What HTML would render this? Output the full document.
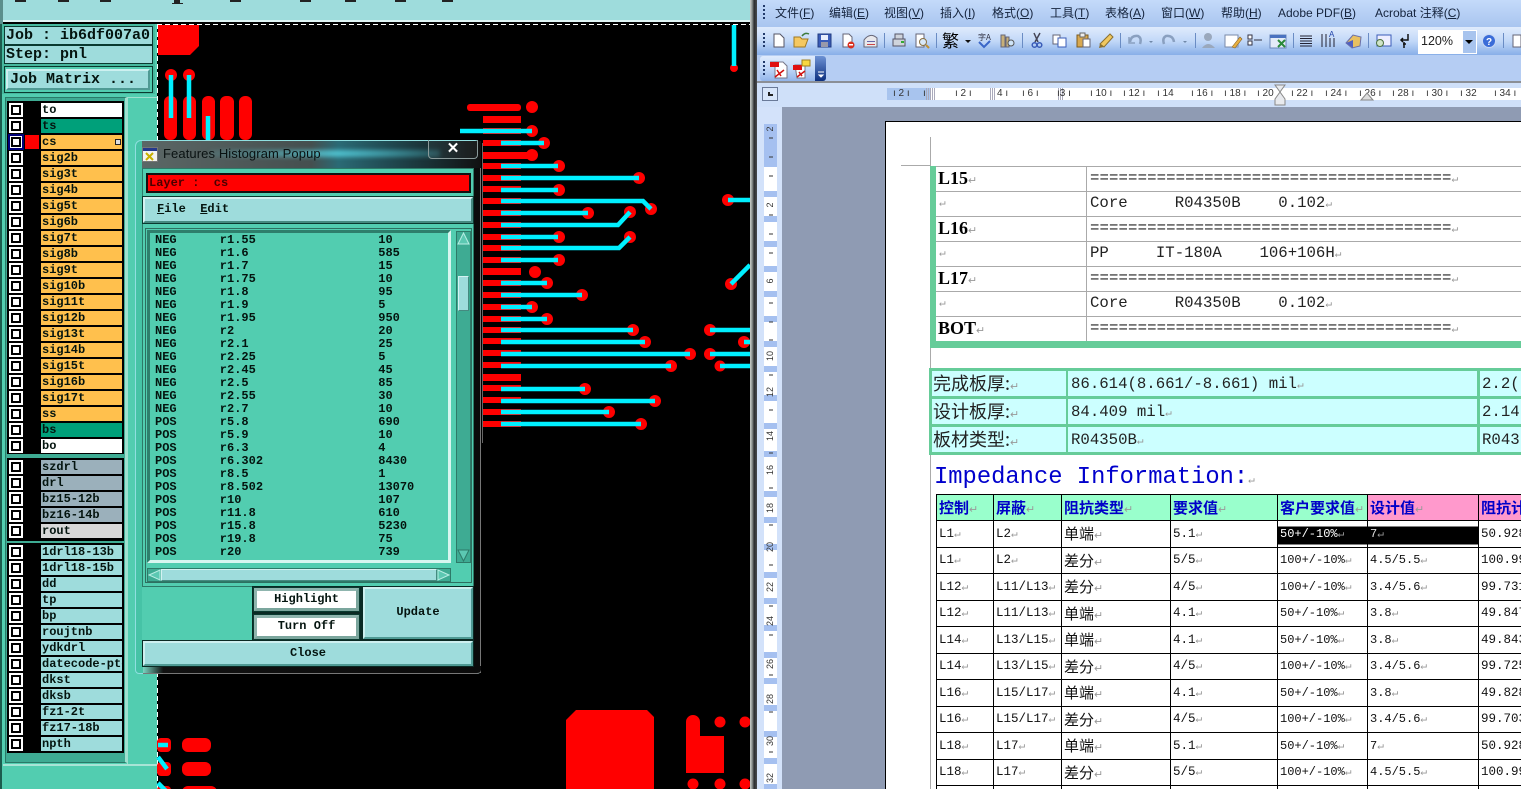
<!DOCTYPE html>
<html><head><meta charset="utf-8"><title>Features Histogram</title>
<style>
html,body{margin:0;padding:0;background:#000}
#p{position:relative;width:1521px;height:789px;overflow:hidden;background:#000;font-family:"Liberation Mono","Noto Sans CJK SC",monospace}
#p div,#p span.a{position:absolute;box-sizing:border-box}
.t{white-space:pre}
.r{left:41px;width:81px;height:14px;font:bold 12px/14px "Liberation Mono",monospace;color:#04140f;padding-left:1px;white-space:pre;overflow:hidden}
.c{left:9px;width:14px;height:14px;background:#fff}
.c::after{content:"";position:absolute;left:2px;top:2px;width:10px;height:10px;box-sizing:border-box;border:2px solid #000;background:#fff}
.am{background:#ffc04d}.gr{background:#9bb0bb}.cy{background:#9edcdc}
.btn{background:#9edcdc;border:2px solid;border-color:#cdf0f0 #4f9a94 #4f9a94 #cdf0f0;font:bold 12px "Liberation Mono",monospace;color:#04140f;text-align:center}
.wb{background:#fff;border:3px solid;border-color:#8fb5ae #7ba69d #7ba69d #8fb5ae;outline:1px solid #0a3a30;font:bold 12px/17px "Liberation Mono",monospace;color:#04140f;text-align:center}
.h{left:155px;width:290px;height:13px;font:bold 12px/13px "Liberation Mono",monospace;color:#04140f;white-space:pre}
.m{top:5px;font:12px/16px "Liberation Sans","Noto Sans CJK SC",sans-serif;color:#14233c;white-space:pre}
.m u{text-underline-offset:1px}
.rn{top:88px;font:10px/12px "Liberation Sans",sans-serif;color:#333;white-space:pre}
.b1{font:bold 18px/20px "Liberation Serif",serif;color:#000;left:938px;white-space:pre}
.mono{font:15.7px/20px "Liberation Mono","Noto Sans CJK SC",monospace;color:#222;white-space:pre}
.rm{color:#999;font-size:11px;font-weight:normal}
table{border-collapse:collapse;table-layout:fixed}
#imp td{border:1px solid #000;height:26.5px;padding:0 0 0 2px;font:12.5px "Liberation Mono","Noto Sans CJK SC",monospace;color:#111;white-space:nowrap;overflow:hidden;box-sizing:border-box}
#imp tr.h0 td{height:26px;background:#99ffcc;color:#0000c8;font:bold 15px "Liberation Sans","Noto Sans CJK SC",sans-serif}
#imp td.z{font:15px "Noto Sans CJK SC",sans-serif}
#imp .s{font-size:12px}
</style></head><body><div id="p">

<!-- LEFT APP -->
<div style="left:0;top:0;width:750px;height:22px;background:#9edcdc;border-bottom:2px solid #dff4f4"></div>
<div style="left:0;top:0;width:3px;height:24px;background:#5a8f8c"></div>
<div style="left:15px;top:0;width:11px;height:2px;background:#222"></div>
<div style="left:58px;top:0;width:11px;height:2px;background:#222"></div>
<div style="left:100px;top:0;width:11px;height:2px;background:#222"></div>
<div style="left:174px;top:0;width:6px;height:3px;background:#222"></div>
<div style="left:172px;top:3px;width:11px;height:1px;background:#222"></div>
<div style="left:230px;top:0;width:11px;height:2px;background:#222"></div>
<div style="left:300px;top:0;width:11px;height:2px;background:#222"></div>
<div style="left:345px;top:0;width:11px;height:2px;background:#222"></div>
<div style="left:395px;top:0;width:11px;height:2px;background:#222"></div>
<div style="left:442px;top:0;width:11px;height:2px;background:#222"></div>

<div style="left:0;top:24px;width:157px;height:765px;background:#52cdb0"></div>
<div style="left:0;top:24px;width:2px;height:765px;background:#1c5c4e"></div>
<div style="left:2px;top:24px;width:153px;height:70px;background:#46b89e"></div>
<div class="t" style="left:4px;top:26px;width:149px;height:19px;background:#9edcdc;border:1px solid #0a3a30;font:bold 15px/17px 'Liberation Mono',monospace;color:#04140f;padding-left:1px">Job : ib6df007a0</div>
<div class="t" style="left:4px;top:45px;width:149px;height:19px;background:#9edcdc;border:1px solid #0a3a30;font:bold 15px/17px 'Liberation Mono',monospace;color:#04140f;padding-left:1px">Step: pnl</div>
<div style="left:4px;top:66px;width:149px;height:27px;background:#52cdb0;border:1px solid #0a3a30"></div>
<div class="btn t" style="left:6px;top:69px;width:144px;height:21px;font-size:15px;line-height:17px;text-align:left;padding-left:2px">Job Matrix ...</div>

<div style="left:5px;top:97px;width:122px;height:666px;background:#3eab93;border:1px solid #2a7a68;border-right:2px solid #9fe0cf"></div>
<div style="left:127px;top:97px;width:30px;height:692px;background:#52cdb0;border-top:1px solid #9fe0cf;border-left:1px solid #9fe0cf"></div>
<div style="left:3px;top:764px;width:154px;height:25px;background:#52cdb0;border-top:2px solid #a8e4d6"></div>

<div style="left:7px;top:101px;width:117px;height:353px;background:#000"></div>
<div style="left:7px;top:458px;width:117px;height:83px;background:#000"></div>
<div style="left:7px;top:543px;width:117px;height:210px;background:#000"></div>

<div class="c" style="top:103px"></div><div class="r" style="top:103px;background:#fff">to</div>
<div class="c" style="top:119px"></div><div class="r" style="top:119px;background:#00a07a">ts</div>
<div class="c" style="top:135px;outline:2px solid #00007a;outline-offset:-1px"></div><div style="left:25px;top:135px;width:14px;height:14px;background:#f00"></div><div class="r am" style="top:135px">cs</div>
<div style="left:115px;top:139px;width:6px;height:6px;border:1px solid #222;background:#ddd"></div>
<div class="c" style="top:151px"></div><div class="r am" style="top:151px">sig2b</div>
<div class="c" style="top:167px"></div><div class="r am" style="top:167px">sig3t</div>
<div class="c" style="top:183px"></div><div class="r am" style="top:183px">sig4b</div>
<div class="c" style="top:199px"></div><div class="r am" style="top:199px">sig5t</div>
<div class="c" style="top:215px"></div><div class="r am" style="top:215px">sig6b</div>
<div class="c" style="top:231px"></div><div class="r am" style="top:231px">sig7t</div>
<div class="c" style="top:247px"></div><div class="r am" style="top:247px">sig8b</div>
<div class="c" style="top:263px"></div><div class="r am" style="top:263px">sig9t</div>
<div class="c" style="top:279px"></div><div class="r am" style="top:279px">sig10b</div>
<div class="c" style="top:295px"></div><div class="r am" style="top:295px">sig11t</div>
<div class="c" style="top:311px"></div><div class="r am" style="top:311px">sig12b</div>
<div class="c" style="top:327px"></div><div class="r am" style="top:327px">sig13t</div>
<div class="c" style="top:343px"></div><div class="r am" style="top:343px">sig14b</div>
<div class="c" style="top:359px"></div><div class="r am" style="top:359px">sig15t</div>
<div class="c" style="top:375px"></div><div class="r am" style="top:375px">sig16b</div>
<div class="c" style="top:391px"></div><div class="r am" style="top:391px">sig17t</div>
<div class="c" style="top:407px"></div><div class="r am" style="top:407px">ss</div>
<div class="c" style="top:423px"></div><div class="r" style="top:423px;background:#00a07a">bs</div>
<div class="c" style="top:439px"></div><div class="r" style="top:439px;background:#fff">bo</div>

<div class="c" style="top:460px"></div><div class="r gr" style="top:460px">szdrl</div>
<div class="c" style="top:476px"></div><div class="r gr" style="top:476px">drl</div>
<div class="c" style="top:492px"></div><div class="r gr" style="top:492px">bz15-12b</div>
<div class="c" style="top:508px"></div><div class="r gr" style="top:508px">bz16-14b</div>
<div class="c" style="top:524px"></div><div class="r" style="top:524px;background:#d8d8d8">rout</div>

<div class="c" style="top:545px"></div><div class="r cy" style="top:545px">1drl18-13b</div>
<div class="c" style="top:561px"></div><div class="r cy" style="top:561px">1drl18-15b</div>
<div class="c" style="top:577px"></div><div class="r cy" style="top:577px">dd</div>
<div class="c" style="top:593px"></div><div class="r cy" style="top:593px">tp</div>
<div class="c" style="top:609px"></div><div class="r cy" style="top:609px">bp</div>
<div class="c" style="top:625px"></div><div class="r cy" style="top:625px">roujtnb</div>
<div class="c" style="top:641px"></div><div class="r cy" style="top:641px">ydkdrl</div>
<div class="c" style="top:657px"></div><div class="r cy" style="top:657px">datecode-ptc</div>
<div class="c" style="top:673px"></div><div class="r cy" style="top:673px">dkst</div>
<div class="c" style="top:689px"></div><div class="r cy" style="top:689px">dksb</div>
<div class="c" style="top:705px"></div><div class="r cy" style="top:705px">fz1-2t</div>
<div class="c" style="top:721px"></div><div class="r cy" style="top:721px">fz17-18b</div>
<div class="c" style="top:737px"></div><div class="r cy" style="top:737px">npth</div>

<!-- PCB -->
<svg style="position:absolute;left:0;top:0" width="750" height="789" viewBox="0 0 750 789">
<line x1="157.500" y1="24" x2="157.500" y2="789" stroke="#fff" stroke-dasharray="5 3"/>
<line x1="157" y1="24.500" x2="750" y2="24.500" stroke="#fff" stroke-dasharray="5 3"/>
<g fill="#f00">
<path d="M158 25H199V46L190 55H158Z"/>
<rect x="164" y="96" width="13" height="44" rx="6"/><rect x="183" y="96" width="13" height="44" rx="6"/><rect x="202" y="96" width="13" height="44" rx="6"/><rect x="220" y="96" width="14" height="44" rx="6"/><rect x="239" y="96" width="13" height="44" rx="6"/>
<circle cx="171" cy="75" r="6"/><circle cx="189" cy="75" r="6"/><circle cx="734" cy="68" r="4"/>
<rect x="467" y="104" width="54" height="7" rx="3"/><rect x="483" y="116" width="38" height="7"/><rect x="483" y="128" width="38" height="6"/>
<rect x="483" y="140" width="38" height="6"/><rect x="483" y="152" width="49" height="7"/><rect x="483" y="163" width="38" height="6"/><rect x="483" y="175" width="38" height="6"/><rect x="483" y="186" width="38" height="6"/><rect x="483" y="198" width="38" height="6"/><rect x="483" y="210" width="38" height="6"/><rect x="483" y="222" width="38" height="6"/><rect x="483" y="234" width="38" height="6"/><rect x="483" y="245" width="38" height="6"/><rect x="483" y="257" width="38" height="6"/><rect x="482" y="268" width="39" height="7"/><rect x="483" y="280" width="38" height="6"/><rect x="483" y="292" width="38" height="6"/><rect x="483" y="304" width="38" height="6"/><rect x="483" y="316" width="38" height="6"/><rect x="483" y="327" width="38" height="6"/><rect x="483" y="338" width="38" height="6"/><rect x="483" y="350" width="38" height="6"/><rect x="483" y="362" width="38" height="6"/><rect x="482" y="374" width="39" height="7"/><rect x="483" y="385" width="38" height="6"/><rect x="483" y="397" width="38" height="6"/><rect x="483" y="409" width="38" height="6"/><rect x="483" y="421" width="38" height="6"/>
<circle cx="532" cy="107" r="6"/><circle cx="532" cy="131" r="6"/><circle cx="544" cy="143" r="6"/><circle cx="532" cy="155" r="6"/><circle cx="559" cy="166" r="6"/><circle cx="639" cy="178" r="6"/><circle cx="559" cy="190" r="6"/><circle cx="651" cy="209" r="6"/><circle cx="588" cy="213" r="6"/><circle cx="630" cy="212" r="6"/><circle cx="559" cy="237" r="6"/><circle cx="630" cy="237" r="6"/><circle cx="559" cy="260" r="6"/><circle cx="535" cy="272" r="6"/><circle cx="547" cy="283" r="6"/><circle cx="582" cy="295" r="6"/><circle cx="532" cy="307" r="6"/><circle cx="547" cy="319" r="6"/><circle cx="633" cy="330" r="6"/><circle cx="645" cy="342" r="6"/><circle cx="690" cy="354" r="6"/><circle cx="671" cy="366" r="6"/><circle cx="585" cy="389" r="6"/><circle cx="655" cy="401" r="6"/><circle cx="609" cy="412" r="6"/><circle cx="641" cy="424" r="6"/>
<circle cx="728" cy="200" r="6"/><circle cx="731" cy="284" r="6"/><circle cx="710" cy="330" r="6"/><circle cx="744" cy="342" r="6"/><circle cx="710" cy="354" r="6"/><circle cx="720" cy="366" r="5.500"/>
<path d="M576 710H647L654 717V789H566V720Z"/>
<path d="M686 722A6 6 0 0 1 700 722V736H724V773H686Z"/>
<circle cx="720" cy="722" r="5.500"/><circle cx="745" cy="722" r="5.500"/><circle cx="693" cy="784" r="5.500"/><circle cx="720" cy="784" r="5.500"/><circle cx="745" cy="784" r="5.500"/>
<rect x="157" y="738" width="14" height="14" rx="4"/><rect x="157" y="762" width="14" height="14" rx="4"/><rect x="157" y="786" width="14" height="14" rx="4"/>
<rect x="182" y="738" width="29" height="14" rx="6"/><rect x="182" y="762" width="29" height="14" rx="6"/><rect x="182" y="786" width="35" height="14" rx="6"/>
</g>
<g stroke="#00f0ff" stroke-width="4.500" fill="none">
<path d="M171 75V118M189 75V118M208 116V150M734 25V66"/>
<path d="M460 131H532M501 143H544M501 166H558M501 178H639M501 190H558M501 201H643L651 209M501 213H588M501 225H618L630 212M501 237H558M501 248H619L630 237M501 260H558M501 283H547M501 295H582M501 307H532M501 319H547M501 330H633M501 342H645M501 354H690M501 366H671M501 389H585M501 401H655M501 412H609M501 424H641"/>
<path d="M728 200H750M731 284L750 265M710 330H750M744 342H750M710 354H750M720 366H750"/>
<path d="M158 745H168M158 757L167 769M158 783L167 792"/>
</g>
</svg>
<div style="left:482px;top:143px;width:1px;height:300px;background:#666"></div>

<!-- POPUP -->
<div style="left:135px;top:140px;width:346px;height:534px;background:#46c3a6;border:1px solid #8fdfe0;border-radius:6px 6px 4px 4px"></div>
<div style="left:473px;top:141px;width:8px;height:532px;background:#0b0b0b;border-right:1px solid #777"></div>
<div style="left:143px;top:666px;width:338px;height:8px;background:linear-gradient(90deg,#7ad6c2,#111 6%,#0b0b0b);border-bottom:1px solid #777;border-radius:0 0 4px 0"></div>
<div style="left:142px;top:141px;width:339px;height:27px;background:linear-gradient(90deg,#5b6766 0,#454f4f 50%,#2a6a75 58%,#1c3a40 80%,#111 100%)"></div>
<div style="left:210px;top:150px;width:230px;height:7px;background:linear-gradient(90deg,rgba(90,220,235,.1),rgba(90,220,235,.75) 55%,rgba(90,220,235,.2));filter:blur(2px)"></div>
<div style="left:428px;top:140px;width:50px;height:19px;border:1px solid #8a9a9a;border-top:none;border-radius:0 0 4px 4px;background:rgba(255,255,255,.04)"></div>
<div style="left:443px;top:140px;width:20px;height:18px;color:#fff;font:bold 15px/18px 'Liberation Sans',sans-serif;text-align:center">✕</div>
<svg style="position:absolute;left:142px;top:147px" width="16" height="15" viewBox="0 0 16 15"><rect x=".5" y=".5" width="15" height="14" fill="#f4f4f0" stroke="#777"/><rect x="1" y="1" width="14" height="3" fill="#24388c"/><path d="M4 6L11 13M11 6L4 13" stroke="#c8b000" stroke-width="2"/></svg>
<div class="t" style="left:163px;top:146px;font:13px/16px 'Liberation Sans',sans-serif;color:#0a1212;letter-spacing:.1px">Features Histogram Popup</div>

<div style="left:142px;top:168px;width:332px;height:498px;background:#52cdb0;border:1px solid #2d7a68"></div>
<div class="t" style="left:146px;top:173px;width:325px;height:20px;background:#f00;border:2px solid #111;font:bold 12px/16px 'Liberation Mono',monospace;color:#4a0000;padding-left:1px">Layer :  cs</div>
<div style="left:143px;top:197px;width:330px;height:26px;background:#9edcdc;border:2px solid;border-color:#d4f2f2 #458a80 #458a80 #d4f2f2;outline:1px solid #0a3a30"></div>
<div class="t" style="left:157px;top:202px;font:bold 12px/14px 'Liberation Mono',monospace;color:#04140f"><u>F</u>ile  <u>E</u>dit</div>

<div style="left:145px;top:228px;width:327px;height:355px;background:#52cdb0;border:1px solid #2d6f60"></div>
<div style="left:147px;top:230px;width:304px;height:333px;background:#52cdb0;border:3px solid;border-color:#2e7f6c #d8f6f0 #d8f6f0 #2e7f6c"></div>
<div class="h" style="top:234px">NEG      r1.55                 10</div>
<div class="h" style="top:247px">NEG      r1.6                  585</div>
<div class="h" style="top:260px">NEG      r1.7                  15</div>
<div class="h" style="top:273px">NEG      r1.75                 10</div>
<div class="h" style="top:286px">NEG      r1.8                  95</div>
<div class="h" style="top:299px">NEG      r1.9                  5</div>
<div class="h" style="top:312px">NEG      r1.95                 950</div>
<div class="h" style="top:325px">NEG      r2                    20</div>
<div class="h" style="top:338px">NEG      r2.1                  25</div>
<div class="h" style="top:351px">NEG      r2.25                 5</div>
<div class="h" style="top:364px">NEG      r2.45                 45</div>
<div class="h" style="top:377px">NEG      r2.5                  85</div>
<div class="h" style="top:390px">NEG      r2.55                 30</div>
<div class="h" style="top:403px">NEG      r2.7                  10</div>
<div class="h" style="top:416px">POS      r5.8                  690</div>
<div class="h" style="top:429px">POS      r5.9                  10</div>
<div class="h" style="top:442px">POS      r6.3                  4</div>
<div class="h" style="top:455px">POS      r6.302                8430</div>
<div class="h" style="top:468px">POS      r8.5                  1</div>
<div class="h" style="top:481px">POS      r8.502                13070</div>
<div class="h" style="top:494px">POS      r10                   107</div>
<div class="h" style="top:507px">POS      r11.8                 610</div>
<div class="h" style="top:520px">POS      r15.8                 5230</div>
<div class="h" style="top:533px">POS      r19.8                 75</div>
<div class="h" style="top:546px">POS      r20                   739</div>

<div style="left:456px;top:231px;width:15px;height:332px;background:#3eab93;border:1px solid #2d7a68"></div>
<svg style="position:absolute;left:456px;top:231px" width="15" height="332" viewBox="0 0 15 332"><path d="M7.500 2L13 13H2Z" fill="#5cc8b2" stroke="#b8eee4"/><path d="M7.500 330L13 319H2Z" fill="#5cc8b2" stroke="#2d7a68"/></svg>
<div style="left:458px;top:276px;width:11px;height:35px;background:#9edcdc;border:1px solid;border-color:#d4f2f2 #458a80 #458a80 #d4f2f2"></div>
<div style="left:147px;top:568px;width:304px;height:14px;background:#3eab93;border:1px solid #2d7a68"></div>
<div style="left:161px;top:569px;width:276px;height:12px;background:#9edcdc;border:1px solid;border-color:#d4f2f2 #458a80 #458a80 #d4f2f2"></div>
<svg style="position:absolute;left:147px;top:568px" width="304" height="14" viewBox="0 0 304 14"><path d="M2 7L13 2V12Z" fill="#5cc8b2" stroke="#b8eee4"/><path d="M302 7L291 2V12Z" fill="#5cc8b2" stroke="#b8eee4"/></svg>

<div style="left:142px;top:586px;width:332px;height:81px;background:#52cdb0;border-top:1px solid #2d7a68"></div>
<div style="left:252px;top:586px;width:110px;height:54px;background:#0a2a24"></div>
<div class="wb" style="left:254px;top:588px;width:105px;height:23px">Highlight</div>
<div class="wb" style="left:254px;top:615px;width:105px;height:24px">Turn Off</div>
<div class="btn" style="left:363px;top:587px;width:110px;height:52px;line-height:47px;outline:1px solid #0a2a24">Update</div>
<div class="btn" style="left:143px;top:641px;width:330px;height:25px;line-height:21px;outline:1px solid #0a2a24">Close</div>

<!-- WORD -->
<div style="left:750px;top:0;width:771px;height:789px;background:#c9dcf8"></div>
<div style="left:750px;top:0;width:7px;height:789px;background:linear-gradient(90deg,#ccd0cc 0,#8c9290 30%,#2c2e30 60%,#4a4c4e 100%)"></div>
<div style="left:757px;top:0;width:764px;height:27px;background:linear-gradient(#c4dafa,#a9c5ef)"></div>
<div style="left:757px;top:27px;width:764px;height:55px;background:#b5cdf3"></div>
<div style="left:757px;top:27px;width:764px;height:28px;background:linear-gradient(#dfebfc,#c2d8f8 50%,#88aee8)"></div>
<div style="left:760px;top:56px;width:66px;height:25px;background:linear-gradient(#dfebfc,#c2d8f8 50%,#92b5ea);border-radius:3px"></div>
<div style="left:815px;top:56px;width:11px;height:25px;background:linear-gradient(#6d92d4,#0c2f7e);border-radius:0 3px 3px 0"></div>
<div style="left:757px;top:81px;width:764px;height:2px;background:#8b8f96"></div>
<div style="left:757px;top:83px;width:764px;height:24px;background:#cfe0f9"></div>

<div class="m" style="left:775px">文件(<u>F</u>)</div>
<div class="m" style="left:829px">编辑(<u>E</u>)</div>
<div class="m" style="left:884px">视图(<u>V</u>)</div>
<div class="m" style="left:940px">插入(<u>I</u>)</div>
<div class="m" style="left:992px">格式(<u>O</u>)</div>
<div class="m" style="left:1050px">工具(<u>T</u>)</div>
<div class="m" style="left:1105px">表格(<u>A</u>)</div>
<div class="m" style="left:1161px">窗口(<u>W</u>)</div>
<div class="m" style="left:1221px">帮助(<u>H</u>)</div>
<div class="m" style="left:1278px">Adobe PDF(<u>B</u>)</div>
<div class="m" style="left:1375px">Acrobat 注释(<u>C</u>)</div>

<!-- toolbar icons -->
<svg style="position:absolute;left:757px;top:0" width="764" height="84" viewBox="757 0 764 84">
<g fill="#223a6a"><rect x="763" y="5" width="2" height="2"/><rect x="763" y="9" width="2" height="2"/><rect x="763" y="13" width="2" height="2"/><rect x="763" y="17" width="2" height="2"/><rect x="763" y="33" width="2" height="2"/><rect x="763" y="37" width="2" height="2"/><rect x="763" y="41" width="2" height="2"/><rect x="763" y="45" width="2" height="2"/><rect x="763" y="61" width="2" height="2"/><rect x="763" y="65" width="2" height="2"/><rect x="763" y="69" width="2" height="2"/><rect x="763" y="73" width="2" height="2"/></g>
<path d="M774 34H780L784 38V47H774Z" fill="#fff" stroke="#556"/>
<path d="M794 47V37H800L802 39H808L805 47Z" fill="#f5c860" stroke="#a07820"/><path d="M802 36Q805 32 809 34" stroke="#3c7a3c" fill="none" stroke-width="1.500"/>
<rect x="818" y="34" width="13" height="13" fill="#3a5cb8" stroke="#223c80"/><rect x="821" y="35" width="7" height="5" fill="#e8eefc"/><rect x="821" y="42" width="7" height="5" fill="#99a"/>
<path d="M843 34H849L852 37V47H843Z" fill="#fff" stroke="#667"/><circle cx="851" cy="45" r="3.500" fill="#d83020"/><rect x="849" y="44" width="4" height="1.500" fill="#fff"/>
<path d="M864 40Q870 32 877 38V47H864Z" fill="#e8e8ec" stroke="#667"/><rect x="867" y="41" width="8" height="1" fill="#66a"/><rect x="867" y="44" width="8" height="1" fill="#c44"/>
<line x1="884.500" y1="33" x2="884.500" y2="48" stroke="#6a8cc4"/>
<path d="M893 39H905V46H893ZM895 34H903V39H895Z" fill="#cfd4dc" stroke="#556"/><rect x="901" y="41" width="3" height="2" fill="#3a3"/>
<path d="M916 34H924V47H916Z" fill="#fff" stroke="#667"/><circle cx="923" cy="42" r="3.500" fill="#d8e8f8" stroke="#8a7040"/><line x1="926" y1="45" x2="929" y2="48" stroke="#c09030" stroke-width="2"/>
<line x1="936.500" y1="33" x2="936.500" y2="48" stroke="#6a8cc4"/>
<text x="942" y="47" font-size="17" font-family="'Noto Sans CJK TC','Noto Sans CJK SC',sans-serif" fill="#000">繁</text>
<path d="M965 40H971L968 43Z" fill="#111"/>
<text x="978" y="40" font-size="8" font-family="'Noto Sans CJK SC',sans-serif" fill="#334">字A</text><path d="M979 42L984 47L990 41" stroke="#3a66c8" fill="none" stroke-width="2"/>
<path d="M1001 35H1005V47H1001ZM1006 37H1009V47H1006Z" fill="#c8b078" stroke="#667"/><circle cx="1011" cy="43" r="3" fill="#cfe4f8" stroke="#555"/>
<line x1="1022.500" y1="33" x2="1022.500" y2="48" stroke="#6a8cc4"/>
<path d="M1034 33L1038 42M1040 33L1035 42" stroke="#445" stroke-width="1.500"/><circle cx="1034.500" cy="45" r="2.300" fill="none" stroke="#3a5cb8" stroke-width="1.500"/><circle cx="1039.500" cy="45" r="2.300" fill="none" stroke="#3a5cb8" stroke-width="1.500"/>
<path d="M1053 35H1060V44H1053Z" fill="#fff" stroke="#667"/><path d="M1058 38H1066V47H1058Z" fill="#fff" stroke="#3a5cb8"/>
<rect x="1077" y="35" width="11" height="12" fill="#d8a850" stroke="#7a5a20"/><rect x="1080" y="33" width="5" height="4" fill="#eee" stroke="#666"/><path d="M1083 39H1090V47H1083Z" fill="#fff" stroke="#667"/>
<path d="M1100 44L1110 34L1113 37L1104 47Z" fill="#f0c860" stroke="#8a7030"/><path d="M1100 44L1104 47L1099 48Z" fill="#8a7030"/>
<line x1="1120.500" y1="33" x2="1120.500" y2="48" stroke="#6a8cc4"/>
<path d="M1130 42Q1131 35 1138 36Q1142 38 1140 44" fill="none" stroke="#8aa0c0" stroke-width="2.500"/><path d="M1129 37V43H1135" fill="none" stroke="#8aa0c0" stroke-width="1.500"/>
<path d="M1149 41H1153L1151 43Z" fill="#7088a8"/>
<path d="M1174 42Q1173 35 1166 36Q1162 38 1164 44" fill="none" stroke="#8aa0c0" stroke-width="2.500"/>
<path d="M1183 41H1187L1185 43Z" fill="#7088a8"/>
<line x1="1195.500" y1="33" x2="1195.500" y2="48" stroke="#6a8cc4"/>
<circle cx="1208" cy="37" r="4" fill="#9aa8bc"/><path d="M1202 48Q1208 40 1215 48Z" fill="#9aa8bc"/>
<rect x="1225" y="35" width="13" height="12" fill="#fff" stroke="#7a8aa8"/><path d="M1232 47L1240 37L1242 39L1235 48Z" fill="#e8b040" stroke="#8a6020" stroke-width=".6"/>
<path d="M1248 35H1252V39H1248ZM1248 41H1252V45H1248ZM1254 40H1262" stroke="#334" fill="#fff"/>
<rect x="1270" y="35" width="16" height="13" fill="#e4ecf8" stroke="#6a86b8"/><rect x="1270" y="35" width="16" height="3" fill="#4a72c0"/><path d="M1278 40L1285 47M1285 40L1278 47" stroke="#2a8a3a" stroke-width="2"/>
<line x1="1293.500" y1="33" x2="1293.500" y2="48" stroke="#6a8cc4"/>
<path d="M1300 36H1312M1300 38.500H1312M1300 41H1312M1300 43.500H1312M1300 46H1312" stroke="#223" stroke-width="1"/>
<path d="M1322 34V47M1326 34V47M1330 38V47M1334 38V47" stroke="#223"/><text x="1329" y="37" font-size="8" fill="#24a" font-family="Liberation Sans">A</text>
<path d="M1346 43L1353 35L1361 37L1360 46L1352 48Z" fill="#e8c060" stroke="#6a70a8"/><path d="M1346 43L1353 40V48Z" fill="#5060c0"/>
<line x1="1368.500" y1="33" x2="1368.500" y2="48" stroke="#6a8cc4"/>
<rect x="1377" y="35" width="14" height="11" fill="#eef" stroke="#3a5cb8"/><circle cx="1380" cy="43" r="3.500" fill="#cfe4c8" stroke="#4a7040"/>
<path d="M1408 34V40H1401M1403 38L1401 40L1403 42M1403 44H1406M1404 42V48" stroke="#111" fill="none" stroke-width="1.500"/>
<rect x="1418" y="30" width="59" height="24" fill="#fff"/>
<text x="1421" y="45" font-size="12.500" font-family="'Liberation Sans',sans-serif" fill="#222">120%</text>
<rect x="1463" y="31" width="13" height="22" fill="#a8c4ee"/><path d="M1465 40H1473L1469 44Z" fill="#000"/>
<circle cx="1489" cy="41" r="6.500" fill="#3a6cd8" stroke="#c8d8f4"/><text x="1486" y="45" font-size="10" font-weight="bold" fill="#fff" font-family="'Liberation Sans',sans-serif">?</text>
<line x1="1503.500" y1="33" x2="1503.500" y2="48" stroke="#6a8cc4"/>
<rect x="1513" y="35" width="8" height="12" fill="#fff" stroke="#667"/>
<path d="M771 62H783L787 66V78H775V66Z" fill="#fff" stroke="#778"/><rect x="770" y="62" width="9" height="5" fill="#e01010"/><path d="M777 70L781 76M784 70L775 77" stroke="#d01010" stroke-width="1.500" fill="none"/>
<path d="M795 65H805V78H797Z" fill="#fff" stroke="#778"/><rect x="793" y="65" width="9" height="5" fill="#e01010"/><rect x="802" y="60" width="8" height="6" fill="#f8d840" stroke="#a08020"/><path d="M799 72L802 76M805 71L797 77" stroke="#d01010" stroke-width="1.500" fill="none"/>
<path d="M818 72H824M819 75H823L821 77Z" stroke="#fff" fill="#fff"/>
</svg>

<!-- rulers -->
<div style="left:762px;top:87px;width:16px;height:14px;background:#d8e6fa;border:1px solid #6a7a98"></div>
<div style="left:768px;top:92px;width:5px;height:4px;border-left:2px solid #222;border-bottom:2px solid #222"></div>
<div style="left:887px;top:88px;width:634px;height:12px;background:#fff"></div>
<div style="left:887px;top:88px;width:44px;height:12px;background:#a8c4ee"></div>
<div class="rn" style="left:893px">ı 2 ı</div><div class="rn" style="left:923px">ı</div>
<div style="left:926px;top:88px;width:10px;height:12px;background:repeating-linear-gradient(90deg,#aab 0 1px,transparent 1px 2px)"></div>
<div class="rn" style="left:955px">ı 2 ı</div>
<div style="left:990px;top:88px;width:6px;height:12px;background:repeating-linear-gradient(90deg,#aab 0 1px,transparent 1px 2px)"></div>
<div class="rn" style="left:997px">4 ı</div><div class="rn" style="left:1022px">ı 6 ı</div>
<div style="left:1058px;top:88px;width:6px;height:12px;background:repeating-linear-gradient(90deg,#aab 0 1px,transparent 1px 2px)"></div>
<div class="rn" style="left:1057px">ı3 ı</div><div class="rn" style="left:1090px">ı 10 ı</div><div class="rn" style="left:1123px">ı 12 ı</div><div class="rn" style="left:1157px">ı 14</div>
<div class="rn" style="left:1191px">ı 16 ı</div><div class="rn" style="left:1224px">ı 18 ı</div><div class="rn" style="left:1257px">ı 20</div>
<div class="rn" style="left:1291px">ı 22 ı</div><div class="rn" style="left:1325px">ı 24 ı</div><div class="rn" style="left:1359px">ı 26 ı</div>
<div class="rn" style="left:1392px">ı 28 ı</div><div class="rn" style="left:1426px">ı 30 ı</div><div class="rn" style="left:1460px">ı 32</div><div class="rn" style="left:1494px">ı 34 ı</div>
<svg style="position:absolute;left:1270px;top:84px" width="140" height="24" viewBox="1270 84 140 24"><path d="M1275 85H1285L1280 92L1285 99V105H1275V99L1280 92Z" fill="#e8eaee" stroke="#888"/><path d="M1361 100L1367 93L1373 100Z" fill="#dedede" stroke="#888"/></svg>

<div style="left:782px;top:107px;width:739px;height:682px;background:#8f9bb3"></div>
<div style="left:757px;top:107px;width:25px;height:682px;background:#d3e2fa"></div>
<div style="left:764px;top:124px;width:13px;height:665px;background:#fff"></div>
<div style="left:764px;top:124px;width:13px;height:43px;background:#a5c0f0"></div>
<div style="left:764px;top:191px;width:13px;height:6px;background:#a5c0f0"></div>
<div style="left:764px;top:216px;width:13px;height:6px;background:#a5c0f0"></div>
<div style="left:764px;top:241px;width:13px;height:6px;background:#a5c0f0"></div>
<div style="left:764px;top:266px;width:13px;height:6px;background:#a5c0f0"></div>
<div style="left:764px;top:291px;width:13px;height:6px;background:#a5c0f0"></div>
<div style="left:764px;top:316px;width:13px;height:6px;background:#a5c0f0"></div>
<div style="left:764px;top:341px;width:13px;height:6px;background:#a5c0f0"></div>
<div style="left:764px;top:366px;width:13px;height:6px;background:#a5c0f0"></div>
<div style="left:764px;top:395px;width:13px;height:6px;background:#a5c0f0"></div>
<div style="left:764px;top:423px;width:13px;height:6px;background:#a5c0f0"></div>
<div style="left:764px;top:451px;width:13px;height:6px;background:#a5c0f0"></div>
<div style="left:764px;top:491px;width:13px;height:6px;background:#a5c0f0"></div>
<div style="left:764px;top:517px;width:13px;height:6px;background:#a5c0f0"></div>
<div style="left:764px;top:544px;width:13px;height:6px;background:#a5c0f0"></div>
<div style="left:764px;top:572px;width:13px;height:6px;background:#a5c0f0"></div>
<div style="left:764px;top:598px;width:13px;height:6px;background:#a5c0f0"></div>
<div style="left:764px;top:625px;width:13px;height:6px;background:#a5c0f0"></div>
<div style="left:764px;top:652px;width:13px;height:6px;background:#a5c0f0"></div>
<div style="left:764px;top:678px;width:13px;height:6px;background:#a5c0f0"></div>
<div style="left:764px;top:705px;width:13px;height:6px;background:#a5c0f0"></div>
<div style="left:764px;top:731px;width:13px;height:6px;background:#a5c0f0"></div>
<div style="left:764px;top:758px;width:13px;height:6px;background:#a5c0f0"></div>
<div style="left:764px;top:784px;width:13px;height:5px;background:#a5c0f0"></div>
<svg style="position:absolute;left:760px;top:120px" width="22" height="669" viewBox="760 120 22 669">
<g fill="#333" font-family="'Liberation Sans',sans-serif" font-size="9" text-anchor="middle">
<text transform="translate(773,129) rotate(-90)">2</text><text transform="translate(773,205) rotate(-90)">2</text><text transform="translate(773,281) rotate(-90)">6</text><text transform="translate(773,356) rotate(-90)">10</text><text transform="translate(773,392) rotate(-90)">12</text><text transform="translate(773,436) rotate(-90)">14</text><text transform="translate(773,470) rotate(-90)">16</text><text transform="translate(773,508) rotate(-90)">18</text><text transform="translate(773,547) rotate(-90)">20</text><text transform="translate(773,587) rotate(-90)">22</text><text transform="translate(773,621) rotate(-90)">24</text><text transform="translate(773,664) rotate(-90)">26</text><text transform="translate(773,699) rotate(-90)">28</text><text transform="translate(773,741) rotate(-90)">30</text><text transform="translate(773,778) rotate(-90)">32</text>
</g>
<path d="M769 138H773M769 157H773M769 176H773M769 215H773M769 234H773M769 253H773M769 303H773M769 322H773M769 340H773M769 375H773M769 410H773M769 453H773M769 488H773M769 525H773M769 565H773M769 606H773M769 635H773M769 675H773M769 712H773M769 752H773" stroke="#333" fill="none"/>
</svg>

<!-- PAGE -->
<div style="left:885px;top:121px;width:636px;height:668px;background:#fff;border:1px solid #000;border-right:none;border-bottom:none"></div>
<div style="left:930px;top:137px;width:1px;height:29px;background:#aaa"></div>
<div style="left:901px;top:165px;width:30px;height:1px;background:#aaa"></div>
<div style="left:930px;top:166px;width:591px;height:1px;background:#aaa"></div>
<div style="left:930px;top:191px;width:591px;height:1px;background:#aaa"></div>
<div style="left:930px;top:216px;width:591px;height:1px;background:#aaa"></div>
<div style="left:930px;top:241px;width:591px;height:1px;background:#aaa"></div>
<div style="left:930px;top:266px;width:591px;height:1px;background:#aaa"></div>
<div style="left:930px;top:291px;width:591px;height:1px;background:#aaa"></div>
<div style="left:930px;top:316px;width:591px;height:1px;background:#aaa"></div>
<div style="left:1086px;top:166px;width:1px;height:176px;background:#aaa"></div>
<div style="left:930px;top:166px;width:6px;height:182px;background:#66cc99"></div>
<div style="left:930px;top:341px;width:591px;height:7px;background:#66cc99"></div>
<div style="left:930px;top:348px;width:1px;height:441px;background:#aaa"></div>

<div class="b1" style="top:168px">L15<span class="rm">↵</span></div>
<div class="b1" style="top:218px">L16<span class="rm">↵</span></div>
<div class="b1" style="top:268px">L17<span class="rm">↵</span></div>
<div class="b1" style="top:318px">BOT<span class="rm">↵</span></div>
<div class="rm" style="left:939px;top:196px">↵</div><div class="rm" style="left:939px;top:246px">↵</div><div class="rm" style="left:939px;top:296px">↵</div>
<div class="mono" style="left:1090px;top:168px;letter-spacing:.1px">======================================<span class="rm">↵</span></div>
<div class="mono" style="left:1090px;top:193px">Core     R04350B    0.102<span class="rm">↵</span></div>
<div class="mono" style="left:1090px;top:218px;letter-spacing:.1px">======================================<span class="rm">↵</span></div>
<div class="mono" style="left:1090px;top:243px">PP     IT-180A    106+106H<span class="rm">↵</span></div>
<div class="mono" style="left:1090px;top:268px;letter-spacing:.1px">======================================<span class="rm">↵</span></div>
<div class="mono" style="left:1090px;top:293px">Core     R04350B    0.102<span class="rm">↵</span></div>
<div class="mono" style="left:1090px;top:318px;letter-spacing:.1px">======================================<span class="rm">↵</span></div>

<!-- table 2 -->
<div style="left:929px;top:368px;width:592px;height:87px;background:#66cc99"></div>
<div style="left:932px;top:371px;width:134px;height:25px;background:#ccffff"></div>
<div style="left:1068px;top:371px;width:409px;height:25px;background:#ccffff"></div>
<div style="left:1480px;top:371px;width:41px;height:25px;background:#ccffff"></div>
<div style="left:932px;top:399px;width:134px;height:25px;background:#ccffff"></div>
<div style="left:1068px;top:399px;width:409px;height:25px;background:#ccffff"></div>
<div style="left:1480px;top:399px;width:41px;height:25px;background:#ccffff"></div>
<div style="left:932px;top:427px;width:134px;height:25px;background:#ccffff"></div>
<div style="left:1068px;top:427px;width:409px;height:25px;background:#ccffff"></div>
<div style="left:1480px;top:427px;width:41px;height:25px;background:#ccffff"></div>
<div class="mono" style="left:933px;top:372px;font-family:'Noto Sans CJK SC',sans-serif;font-size:18px;line-height:22px">完成板厚:<span class="rm">↵</span></div>
<div class="mono" style="left:933px;top:400px;font-family:'Noto Sans CJK SC',sans-serif;font-size:18px;line-height:22px">设计板厚:<span class="rm">↵</span></div>
<div class="mono" style="left:933px;top:428px;font-family:'Noto Sans CJK SC',sans-serif;font-size:18px;line-height:22px">板材类型:<span class="rm">↵</span></div>
<div class="mono" style="left:1071px;top:374px">86.614(8.661/-8.661) mil<span class="rm">↵</span></div>
<div class="mono" style="left:1071px;top:402px">84.409 mil<span class="rm">↵</span></div>
<div class="mono" style="left:1071px;top:430px">R04350B<span class="rm">↵</span></div>
<div class="mono" style="left:1482px;top:374px">2.2(</div>
<div class="mono" style="left:1482px;top:402px">2.14</div>
<div class="mono" style="left:1482px;top:430px">R043</div>

<div class="t" style="left:934px;top:463px;font:23.800px/30px 'Liberation Mono',monospace;color:#0000cc">Impedance Information:<span class="rm">↵</span></div>

<!-- impedance table -->
<div style="left:936px;top:494px;width:585px;height:295px;overflow:hidden">
<table id="imp" style="position:absolute;left:0;top:0;width:640px">
<colgroup><col style="width:57px"><col style="width:68px"><col style="width:109px"><col style="width:107px"><col style="width:90px"><col style="width:111px"><col style="width:98px"></colgroup>
<tr class="h0"><td>控制<span class="rm">↵</span></td><td>屏蔽<span class="rm">↵</span></td><td>阻抗类型<span class="rm">↵</span></td><td>要求值<span class="rm">↵</span></td><td>客户要求值<span class="rm">↵</span></td><td style="background:#ff99cc">设计值<span class="rm">↵</span></td><td style="background:#ff99cc">阻抗计算值</td></tr>
<tr><td>L1<span class="rm">↵</span></td><td>L2<span class="rm">↵</span></td><td class="z">单端<span class="rm">↵</span></td><td>5.1<span class="rm">↵</span></td><td class="s" style="background:linear-gradient(#fff 5px,#000 5px,#000 23px,#fff 23px);color:#fff">50+/-10%<span class="rm">↵</span></td><td class="s" style="background:linear-gradient(#fff 5px,#000 5px,#000 23px,#fff 23px);color:#ddd">7<span class="rm">↵</span></td><td>50.928</td></tr>
<tr><td>L1<span class="rm">↵</span></td><td>L2<span class="rm">↵</span></td><td class="z">差分<span class="rm">↵</span></td><td>5/5<span class="rm">↵</span></td><td class="s">100+/-10%<span class="rm">↵</span></td><td class="s">4.5/5.5<span class="rm">↵</span></td><td>100.99</td></tr>
<tr><td>L12<span class="rm">↵</span></td><td>L11/L13<span class="rm">↵</span></td><td class="z">差分<span class="rm">↵</span></td><td>4/5<span class="rm">↵</span></td><td class="s">100+/-10%<span class="rm">↵</span></td><td class="s">3.4/5.6<span class="rm">↵</span></td><td>99.731</td></tr>
<tr><td>L12<span class="rm">↵</span></td><td>L11/L13<span class="rm">↵</span></td><td class="z">单端<span class="rm">↵</span></td><td>4.1<span class="rm">↵</span></td><td class="s">50+/-10%<span class="rm">↵</span></td><td class="s">3.8<span class="rm">↵</span></td><td>49.847</td></tr>
<tr><td>L14<span class="rm">↵</span></td><td>L13/L15<span class="rm">↵</span></td><td class="z">单端<span class="rm">↵</span></td><td>4.1<span class="rm">↵</span></td><td class="s">50+/-10%<span class="rm">↵</span></td><td class="s">3.8<span class="rm">↵</span></td><td>49.843</td></tr>
<tr><td>L14<span class="rm">↵</span></td><td>L13/L15<span class="rm">↵</span></td><td class="z">差分<span class="rm">↵</span></td><td>4/5<span class="rm">↵</span></td><td class="s">100+/-10%<span class="rm">↵</span></td><td class="s">3.4/5.6<span class="rm">↵</span></td><td>99.725</td></tr>
<tr><td>L16<span class="rm">↵</span></td><td>L15/L17<span class="rm">↵</span></td><td class="z">单端<span class="rm">↵</span></td><td>4.1<span class="rm">↵</span></td><td class="s">50+/-10%<span class="rm">↵</span></td><td class="s">3.8<span class="rm">↵</span></td><td>49.828</td></tr>
<tr><td>L16<span class="rm">↵</span></td><td>L15/L17<span class="rm">↵</span></td><td class="z">差分<span class="rm">↵</span></td><td>4/5<span class="rm">↵</span></td><td class="s">100+/-10%<span class="rm">↵</span></td><td class="s">3.4/5.6<span class="rm">↵</span></td><td>99.703</td></tr>
<tr><td>L18<span class="rm">↵</span></td><td>L17<span class="rm">↵</span></td><td class="z">单端<span class="rm">↵</span></td><td>5.1<span class="rm">↵</span></td><td class="s">50+/-10%<span class="rm">↵</span></td><td class="s">7<span class="rm">↵</span></td><td>50.928</td></tr>
<tr><td>L18<span class="rm">↵</span></td><td>L17<span class="rm">↵</span></td><td class="z">差分<span class="rm">↵</span></td><td>5/5<span class="rm">↵</span></td><td class="s">100+/-10%<span class="rm">↵</span></td><td class="s">4.5/5.5<span class="rm">↵</span></td><td>100.99</td></tr>
<tr><td></td><td></td><td></td><td></td><td></td><td></td><td></td></tr>
</table>
</div>
</div></body></html>
